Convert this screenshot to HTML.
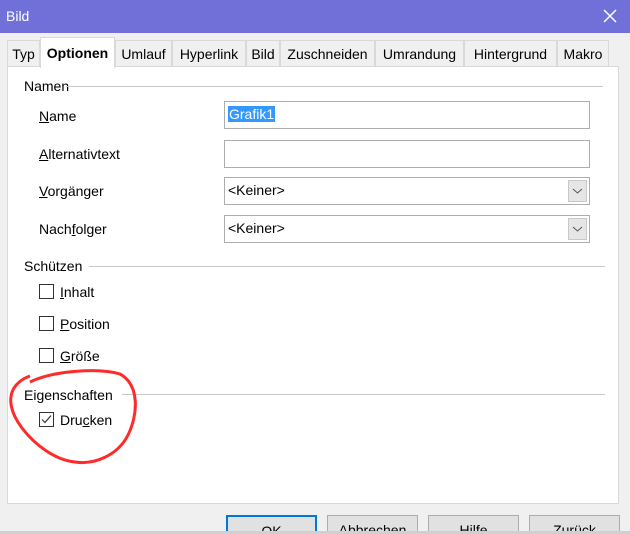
<!DOCTYPE html>
<html style="overflow:hidden;width:630px;height:534px"><head><meta charset="utf-8"><style>
*{box-sizing:border-box;margin:0;padding:0}
body{width:630px;height:534px;overflow:hidden;background:#f0f0f0;font-family:"Liberation Sans",sans-serif;font-size:14px;color:#000;position:relative}
.a{position:absolute}
.title{left:0;top:0;width:630px;height:33px;background:#7070d8;color:#fff;font-size:14px}
.tab{top:40px;height:27px;border:1px solid #d9d9d9;border-bottom:none;background:#f0f0f0;padding:5px 0 0;text-align:center;font-size:14px}
.panel{left:7px;top:66px;width:612px;height:438px;background:#fff;border:1px solid #d9d9d9}
.lbl{font-size:14px}
.line{height:1px;background:#c8c8c8}
.fld{left:224px;width:366px;height:28px;border:1px solid #adadad;background:#fff;padding:4px 3px}
.dd{position:absolute;right:2px;top:2px;width:19px;height:22px;background:#e6e6e6;border:1px solid #c8c8c8}
.cb{width:15px;height:15px;border:1px solid #333;background:#fff}
.btn{top:515px;width:91px;height:19px;border:1px solid #adadad;border-bottom:none;background:#e1e1e1;text-align:center;padding-top:6px;overflow:hidden}
u{text-decoration:underline}
</style></head><body>
<div class="a title"><span class="a" style="left:6px;top:8px">Bild</span>
<svg class="a" style="left:603px;top:9px" width="14" height="14"><path d="M1 1L13 13M13 1L1 13" stroke="#fff" stroke-width="1.5"/></svg></div>
<div class="a tab" style="left:7px;width:33px">Typ</div>
<div class="a tab" style="left:115px;width:57px">Umlauf</div>
<div class="a tab" style="left:172px;width:74px">Hyperlink</div>
<div class="a tab" style="left:246px;width:34px">Bild</div>
<div class="a tab" style="left:280px;width:95px">Zuschneiden</div>
<div class="a tab" style="left:375px;width:89px">Umrandung</div>
<div class="a tab" style="left:464px;width:93px">Hintergrund</div>
<div class="a tab" style="left:557px;width:52px">Makro</div>
<div class="a panel"></div>
<div class="a tab" style="left:40px;top:37px;width:75px;height:31px;background:#fff;font-weight:bold;padding-top:7px;border-color:#d9d9d9">Optionen</div>

<div class="a lbl" style="left:24px;top:78px">Namen</div><div class="a line" style="left:66px;top:86px;width:537px"></div>
<div class="a lbl" style="left:39px;top:108px"><u>N</u>ame</div>
<div class="a fld" style="top:101px"><span style="background:#3399ff;color:#fff;padding:0 1px">Grafik1</span></div>
<div class="a lbl" style="left:39px;top:146px"><u>A</u>lternativtext</div>
<div class="a fld" style="top:140px"></div>
<div class="a lbl" style="left:39px;top:183px"><u>V</u>orgänger</div>
<div class="a fld" style="top:177px">&lt;Keiner&gt;<div class="dd"><svg width="17" height="20"><path d="M4 8l4.5 4 4.5-4" stroke="#555" fill="none"/></svg></div></div>
<div class="a lbl" style="left:39px;top:221px">Nach<u>f</u>olger</div>
<div class="a fld" style="top:215px">&lt;Keiner&gt;<div class="dd"><svg width="17" height="20"><path d="M4 8l4.5 4 4.5-4" stroke="#555" fill="none"/></svg></div></div>

<div class="a lbl" style="left:24px;top:258px">Schützen</div><div class="a line" style="left:89px;top:266px;width:516px"></div>
<div class="a cb" style="left:39px;top:284px"></div><div class="a lbl" style="left:60px;top:284px"><u>I</u>nhalt</div>
<div class="a cb" style="left:39px;top:316px"></div><div class="a lbl" style="left:60px;top:316px"><u>P</u>osition</div>
<div class="a cb" style="left:39px;top:348px"></div><div class="a lbl" style="left:60px;top:348px"><u>G</u>röße</div>

<div class="a lbl" style="left:24px;top:387px">Eigenschaften</div><div class="a line" style="left:122px;top:394px;width:483px"></div>
<div class="a cb" style="left:39px;top:412px"><svg width="13" height="13" style="position:absolute;left:0;top:0"><path d="M2 6.5l3 3 6-7" stroke="#333" fill="none" stroke-width="1.2"/></svg></div>
<div class="a lbl" style="left:60px;top:412px">Dru<u>c</u>ken</div>

<svg class="a" style="left:0;top:360px" width="160" height="110"><path d="M30 22 C 55 10, 100 8, 120 14 C 140 25, 138 55, 128 75 C 118 95, 95 105, 75 102 C 55 100, 35 85, 22 68 C 10 52, 8 38, 14 28 C 18 22, 24 18, 30 16" stroke="#ff2a2a" stroke-width="3" fill="none"/></svg>

<div class="a btn" style="left:226px;border:2px solid #0078d7;border-bottom:none">OK</div>
<div class="a btn" style="left:327px">Abbrechen</div>
<div class="a btn" style="left:428px">Hilfe</div>
<div class="a btn" style="left:529px">Zurück</div>
<div class="a" style="left:0;top:531px;width:630px;height:3px;background:#d0d0d0"></div>
</body></html>
